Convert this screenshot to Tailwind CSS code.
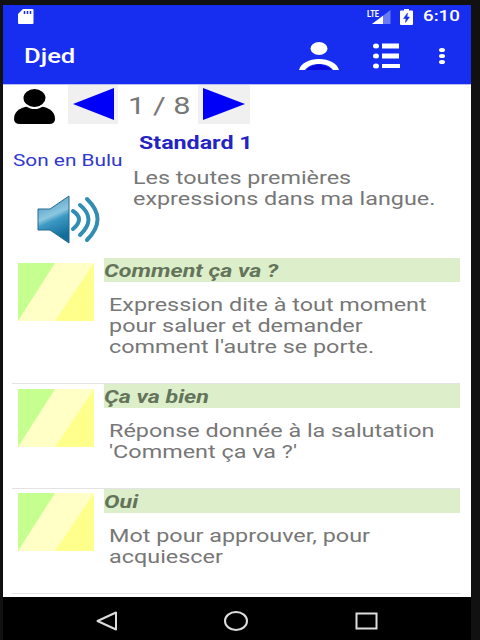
<!DOCTYPE html>
<html lang="fr">
<head>
  <meta charset="UTF-8" />
  <meta name="viewport" content="width=device-width, initial-scale=1.0"/>
  <title>Djed</title>
  <script src="https://cdn.jsdelivr.net/npm/@tailwindcss/browser@4"></script>
</head>
<body class="bg-[#111111] h-[640px] overflow-hidden font-['Roboto',sans-serif]">
  <div class="ml-[3px] w-[468px] h-[640px] pt-[5px] flex flex-col">

    <!-- Status bar and toolbar -->
    <header class="h-[79px] shrink-0 bg-[#172ef0] text-white">
      <div class="h-[23px] flex items-center pl-[15px] pr-[12px]">
        <svg class="w-4 h-[15px]" viewBox="0 0 16 15">
          <path d="M5 0H14.500Q15.500 0 15.500 1V14Q15.500 15 14.500 15H1Q0 15 0 14V5Z" fill="#fff"/>
          <path d="M6.500 2V5M9.500 2V5M12.500 2V5" stroke="#172ef0" stroke-width="1.500"/>
        </svg>
        <div class="ml-auto flex items-center">
          <svg class="w-6 h-4 mr-[9px]" viewBox="0 0 24 16">
            <path d="M23.500 1V15H5Z" fill="#6b7bf5"/>
            <path d="M16 6.800V15H5Z" fill="#fff"/>
            <text x="0" y="7.500" font-size="9" font-weight="700" textLength="12" lengthAdjust="spacingAndGlyphs" fill="#fff">LTE</text>
          </svg>
          <svg class="w-[13px] h-4 mr-[10px]" viewBox="0 0 13 16">
            <path d="M1 1.500H4V0H9V1.500H12Q13 1.500 13 2.500V15Q13 16 12 16H1Q0 16 0 15V2.500Q0 1.500 1 1.500Z" fill="#fff"/>
            <path d="M7.500 4L3.500 9.500H6L5.500 13.500L9.500 8H7Z" fill="#172ef0" stroke="#172ef0" stroke-width="0.500"/>
          </svg>
          <div class="w-[36px] text-[15px] font-medium"><span class="inline-block origin-left scale-x-[1.25]">6:10</span></div>
        </div>
      </div>
      <div class="h-[56px] flex items-center pl-[21px] pr-[26px]">
        <h1 class="text-[20px] font-medium origin-left scale-x-[1.28]">Djed</h1>
        <svg class="ml-auto w-10 h-7 mr-[34px]" viewBox="0 0 40 28">
          <ellipse cx="20" cy="6.500" rx="8.500" ry="6.500" fill="#fff"/>
          <path d="M7 28Q20 17 33 28Z" fill="#0808dc"/>
          <path d="M0 28C2 21 10 17 20 17S38 21 40 28H34C31 24 26 22 20 22S9 24 6 28Z" fill="#fff"/>
        </svg>
        <svg class="w-[27px] h-[26px] mr-[39px]" viewBox="0 0 27 26" fill="#fff">
          <ellipse cx="3" cy="3" rx="3" ry="2.500"/><rect x="9" y="0.500" width="17" height="5"/>
          <ellipse cx="3" cy="13" rx="3" ry="2.500"/><rect x="9" y="10.500" width="17" height="5"/>
          <ellipse cx="3" cy="23" rx="3" ry="2.500"/><rect x="9" y="21" width="18" height="4"/>
        </svg>
        <svg class="w-[6px] h-4" viewBox="0 0 6 16" fill="#fff">
          <ellipse cx="3" cy="2" rx="3" ry="2"/><ellipse cx="3" cy="8" rx="3" ry="2"/><ellipse cx="3" cy="14" rx="3" ry="2"/>
        </svg>
      </div>
    </header>

    <main class="h-[513px] shrink-0 bg-white text-[#777777] overflow-hidden border-t border-[#b9bff5]">
      <!-- Lesson pager -->
      <div class="h-[39px] flex">
        <svg class="w-[41px] h-[35px] mt-1 ml-[11px] mr-[13px]" viewBox="0 0 41 35">
          <path d="M0 30C0 21 8 17 20.500 17S41 21 41 30Q41 35 35 35H6Q0 35 0 30Z"/>
          <ellipse cx="20.500" cy="9.500" rx="12.500" ry="10.500" fill="#fff"/>
          <ellipse cx="20.500" cy="9" rx="11" ry="9"/>
        </svg>
        <div class="w-[50px] bg-[#f0f0f0] pl-[5px] pt-[3px]">
          <svg class="w-[41px] h-8" viewBox="0 0 41 32"><path d="M0 16L41 0V32Z" fill="#0000f8"/></svg>
        </div>
        <div class="w-[80px] pt-[7px] pl-[10px] text-2xl leading-7 whitespace-nowrap"><span class="inline-block origin-left scale-x-[1.28]">1 / 8</span></div>
        <div class="w-[52px] bg-[#f0f0f0] pl-[5px] pt-[3px]">
          <svg class="w-[42px] h-8" viewBox="0 0 42 32"><path d="M0 0L42 16L0 32Z" fill="#0000f8"/></svg>
        </div>
      </div>

      <!-- Lesson summary -->
      <section class="h-[134px] flex whitespace-nowrap">
        <div class="w-[130px] pl-[10px] pt-[27px] text-[#3037cf]">
          <p class="w-max text-[16px] leading-5 origin-left scale-x-[1.3]">Son en Bulu</p>
          <svg class="w-[63px] h-[49px] mt-[24px] ml-[24px]" viewBox="0 0 63 49">
            <defs>
              <linearGradient id="cone" x1="0" y1="0" x2="0.300" y2="1">
                <stop offset="0" stop-color="#3c8db8"/><stop offset="0.500" stop-color="#8cc7e0"/><stop offset="0.620" stop-color="#3d9ac4"/><stop offset="1" stop-color="#126d9b"/>
              </linearGradient>
            </defs>
            <path d="M1 14H13L32 1V48L13 35H1Z" fill="url(#cone)" stroke="#286b8d"/>
            <g fill="none" stroke="#328db5" stroke-width="4" stroke-linecap="round">
              <path d="M36 16Q48 24 36 34"/><path d="M43 10Q60 24 43 40"/><path d="M50 4Q71 24 50 45"/>
            </g>
          </svg>
        </div>
        <div class="pt-[8px]">
          <h2 class="ml-[6px] w-max text-[18px] leading-[21px] font-bold text-[#2424c4] origin-left scale-x-[1.29]">Standard 1</h2>
          <p class="mt-[14px] w-max text-[18px] leading-[21px] origin-left scale-x-[1.297]">Les toutes premières<br>expressions dans ma langue.</p>
        </div>
      </section>

      <!-- Expressions -->
      <ul class="ml-[9px] w-[448px] whitespace-nowrap">
        <li class="h-[126px] flex border-b border-[#e4e4e4]">
          <svg class="w-[76px] h-[58px] mt-[5px] ml-[6px] mr-[10px]" viewBox="0 0 76 58">
            <rect width="76" height="58" fill="#ffffc6"/><path d="M0 0H37L0 58Z" fill="#c5ff8f"/><path d="M76 0V58H37Z" fill="#ffff8c"/>
          </svg>
          <div class="w-[356px]">
            <h3 class="h-6 bg-[#dcefca] text-[#64745a] text-[18px] leading-[26px] font-bold italic"><span class="inline-block origin-left scale-x-[1.29]">Comment ça va ?</span></h3>
            <p class="mt-3 ml-[5px] w-max text-[18px] leading-[21px] origin-left scale-x-[1.299]">Expression dite à tout moment<br>pour saluer et demander<br>comment l'autre se porte.</p>
          </div>
        </li>
        <li class="h-[105px] flex border-b border-[#e4e4e4]">
          <svg class="w-[76px] h-[58px] mt-[5px] ml-[6px] mr-[10px]" viewBox="0 0 76 58">
            <rect width="76" height="58" fill="#ffffc6"/><path d="M0 0H37L0 58Z" fill="#c5ff8f"/><path d="M76 0V58H37Z" fill="#ffff8c"/>
          </svg>
          <div class="w-[356px]">
            <h3 class="h-6 bg-[#dcefca] text-[#64745a] text-[18px] leading-[25px] font-bold italic"><span class="inline-block origin-left scale-x-[1.29]">Ça va bien</span></h3>
            <p class="mt-3 ml-[5px] w-max text-[18px] leading-[21px] origin-left scale-x-[1.299]">Réponse donnée à la salutation<br>'Comment ça va ?'</p>
          </div>
        </li>
        <li class="h-[105px] flex border-b border-[#e4e4e4]">
          <svg class="w-[76px] h-[58px] mt-[4px] ml-[6px] mr-[10px]" viewBox="0 0 76 58">
            <rect width="76" height="58" fill="#ffffc6"/><path d="M0 0H37L0 58Z" fill="#c5ff8f"/><path d="M76 0V58H37Z" fill="#ffff8c"/>
          </svg>
          <div class="w-[356px]">
            <h3 class="h-6 bg-[#dcefca] text-[#64745a] text-[18px] leading-[25px] font-bold italic"><span class="inline-block origin-left scale-x-[1.29]">Oui</span></h3>
            <p class="mt-3 ml-[5px] w-max text-[18px] leading-[21px] origin-left scale-x-[1.299]">Mot pour approuver, pour<br>acquiescer</p>
          </div>
        </li>
      </ul>
    </main>

    <!-- Android navigation bar -->
    <nav class="h-[43px] shrink-0 bg-black flex items-center pt-[5px] pl-[93px]">
      <svg class="w-[22px] h-[20px] mr-[106px]" viewBox="0 0 22 20" fill="none" stroke="#ddd" stroke-width="2"><path d="M1.500 10L20 1.500V18.500Z" stroke-linejoin="round"/></svg>
      <svg class="w-6 h-5 mr-[107px]" viewBox="0 0 24 20" fill="none" stroke="#ddd" stroke-width="2"><ellipse cx="12" cy="10" rx="11" ry="9"/></svg>
      <svg class="w-[23px] h-[18px]" viewBox="0 0 23 18" fill="none" stroke="#ddd" stroke-width="2"><rect x="1.500" y="1.500" width="20" height="15"/></svg>
    </nav>
  </div>
</body>
</html>
